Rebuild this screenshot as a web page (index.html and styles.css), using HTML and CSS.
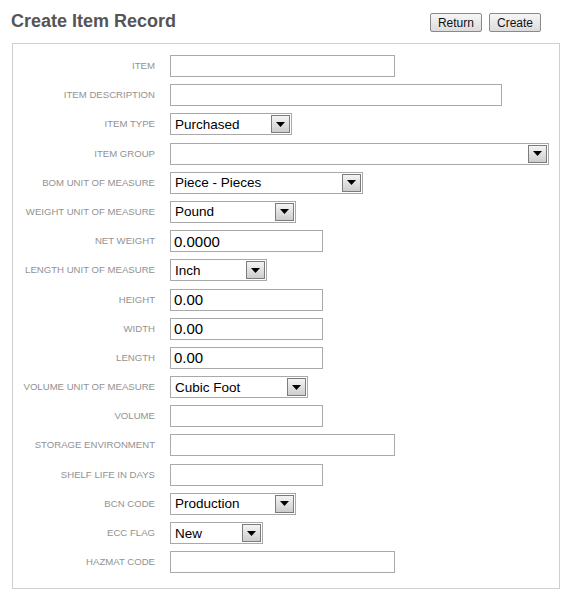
FILE: index.html
```html
<!DOCTYPE html>
<html>
<head>
<meta charset="utf-8">
<title>Create Item Record</title>
<link rel="stylesheet" href="styles.css">
</head>
<body>
<div class="header">
  <h1 class="title">Create Item Record</h1>
  <div class="actions">
    <button class="btn">Return</button>
    <button class="btn">Create</button>
  </div>
</div>
<div class="panel">
  <div class="form">
    <label class="lbl">ITEM</label>
    <div class="cell"><input class="txt w-md" type="text"></div>

    <label class="lbl">ITEM DESCRIPTION</label>
    <div class="cell"><input class="txt w-lg" type="text"></div>

    <label class="lbl">ITEM TYPE</label>
    <div class="cell"><div class="sel s-type"><span class="val">Purchased</span><span class="arr"><svg width="9" height="5" viewBox="0 0 9 5"><path d="M0 0H9L4.5 5Z" fill="#000"/></svg></span></div></div>

    <label class="lbl">ITEM GROUP</label>
    <div class="cell"><div class="sel s-group"><span class="val"></span><span class="arr"><svg width="9" height="5" viewBox="0 0 9 5"><path d="M0 0H9L4.5 5Z" fill="#000"/></svg></span></div></div>

    <label class="lbl">BOM UNIT OF MEASURE</label>
    <div class="cell"><div class="sel s-bom"><span class="val">Piece - Pieces</span><span class="arr"><svg width="9" height="5" viewBox="0 0 9 5"><path d="M0 0H9L4.5 5Z" fill="#000"/></svg></span></div></div>

    <label class="lbl">WEIGHT UNIT OF MEASURE</label>
    <div class="cell"><div class="sel s-weight"><span class="val">Pound</span><span class="arr"><svg width="9" height="5" viewBox="0 0 9 5"><path d="M0 0H9L4.5 5Z" fill="#000"/></svg></span></div></div>

    <label class="lbl">NET WEIGHT</label>
    <div class="cell"><input class="txt w-sm" type="text" value="0.0000"></div>

    <label class="lbl">LENGTH UNIT OF MEASURE</label>
    <div class="cell"><div class="sel s-length"><span class="val">Inch</span><span class="arr"><svg width="9" height="5" viewBox="0 0 9 5"><path d="M0 0H9L4.5 5Z" fill="#000"/></svg></span></div></div>

    <label class="lbl">HEIGHT</label>
    <div class="cell"><input class="txt w-sm" type="text" value="0.00"></div>

    <label class="lbl">WIDTH</label>
    <div class="cell"><input class="txt w-sm" type="text" value="0.00"></div>

    <label class="lbl">LENGTH</label>
    <div class="cell"><input class="txt w-sm" type="text" value="0.00"></div>

    <label class="lbl">VOLUME UNIT OF MEASURE</label>
    <div class="cell"><div class="sel s-volume"><span class="val">Cubic Foot</span><span class="arr"><svg width="9" height="5" viewBox="0 0 9 5"><path d="M0 0H9L4.5 5Z" fill="#000"/></svg></span></div></div>

    <label class="lbl">VOLUME</label>
    <div class="cell"><input class="txt w-sm" type="text"></div>

    <label class="lbl">STORAGE ENVIRONMENT</label>
    <div class="cell"><input class="txt w-md" type="text"></div>

    <label class="lbl">SHELF LIFE IN DAYS</label>
    <div class="cell"><input class="txt w-sm" type="text"></div>

    <label class="lbl">BCN CODE</label>
    <div class="cell"><div class="sel s-bcn"><span class="val">Production</span><span class="arr"><svg width="9" height="5" viewBox="0 0 9 5"><path d="M0 0H9L4.5 5Z" fill="#000"/></svg></span></div></div>

    <label class="lbl">ECC FLAG</label>
    <div class="cell"><div class="sel s-ecc"><span class="val">New</span><span class="arr"><svg width="9" height="5" viewBox="0 0 9 5"><path d="M0 0H9L4.5 5Z" fill="#000"/></svg></span></div></div>

    <label class="lbl">HAZMAT CODE</label>
    <div class="cell"><input class="txt w-md" type="text"></div>
  </div>
</div>
</body>
</html>
```

FILE: styles.css
```css
html, body {
  margin: 0;
  padding: 0;
  background: #ffffff;
  font-family: "Liberation Sans", Arial, sans-serif;
}

.header {
  display: flex;
  justify-content: space-between;
  align-items: flex-start;
  height: 43px;
  padding-left: 11px;
  padding-right: 27px;
}

.title {
  margin: 0;
  padding-top: 10px;
  font-size: 18px;
  line-height: 22px;
  font-weight: bold;
  color: #555555;
}

.actions {
  display: flex;
  gap: 7px;
  margin-top: 13px;
}

.btn {
  height: 19px;
  padding: 0 7px;
  font-family: "Liberation Sans", Arial, sans-serif;
  font-size: 12px;
  color: #111;
  border: 1px solid #8a8a8a;
  border-radius: 2px;
  background: linear-gradient(#f6f6f6, #dcdcdc);
  line-height: 16px;
}

.panel {
  margin-left: 12px;
  width: 548px;
  height: 546px;
  box-sizing: border-box;
  border: 1px solid #cfcfcf;
  padding: 11px 0 15px 0;
}

.form {
  display: grid;
  grid-template-columns: 142px 1fr;
  column-gap: 15px;
  row-gap: 7.2px;
}

.lbl {
  text-align: right;
  font-size: 9.6px;
  color: #929292;
  height: 22px;
  line-height: 22px;
  white-space: nowrap;
}

.cell {
  display: flex;
  align-items: center;
  height: 22px;
}

.txt {
  box-sizing: border-box;
  height: 22px;
  margin: 0;
  border: 1px solid #a9a9a9;
  padding: 0 3px;
  font-family: "Liberation Sans", Arial, sans-serif;
  font-size: 15px;
  color: #000;
  background: #fff;
  outline: none;
}

.w-sm { width: 153px; }
.w-md { width: 225px; }
.w-lg { width: 332px; }

.sel {
  box-sizing: border-box;
  height: 22px;
  display: flex;
  align-items: center;
  border: 1px solid #a9a9a9;
  background: #fff;
  font-size: 13.5px;
  color: #000;
}

.val {
  flex: 1;
  padding-left: 4px;
  white-space: nowrap;
  overflow: hidden;
}

.arr {
  box-sizing: border-box;
  width: 19px;
  height: 18px;
  margin-right: 1px;
  border: 1px solid #7c7c7c;
  background: linear-gradient(#f4f4f4, #cdcdcd);
  display: flex;
  align-items: center;
  justify-content: center;
}

.arr svg { display: block; }

.s-type { width: 122px; }
.s-group { width: 379px; }
.s-bom { width: 193px; }
.s-weight { width: 126px; }
.s-length { width: 97px; }
.s-volume { width: 138px; }
.s-bcn { width: 126px; }
.s-ecc { width: 93px; }
```
